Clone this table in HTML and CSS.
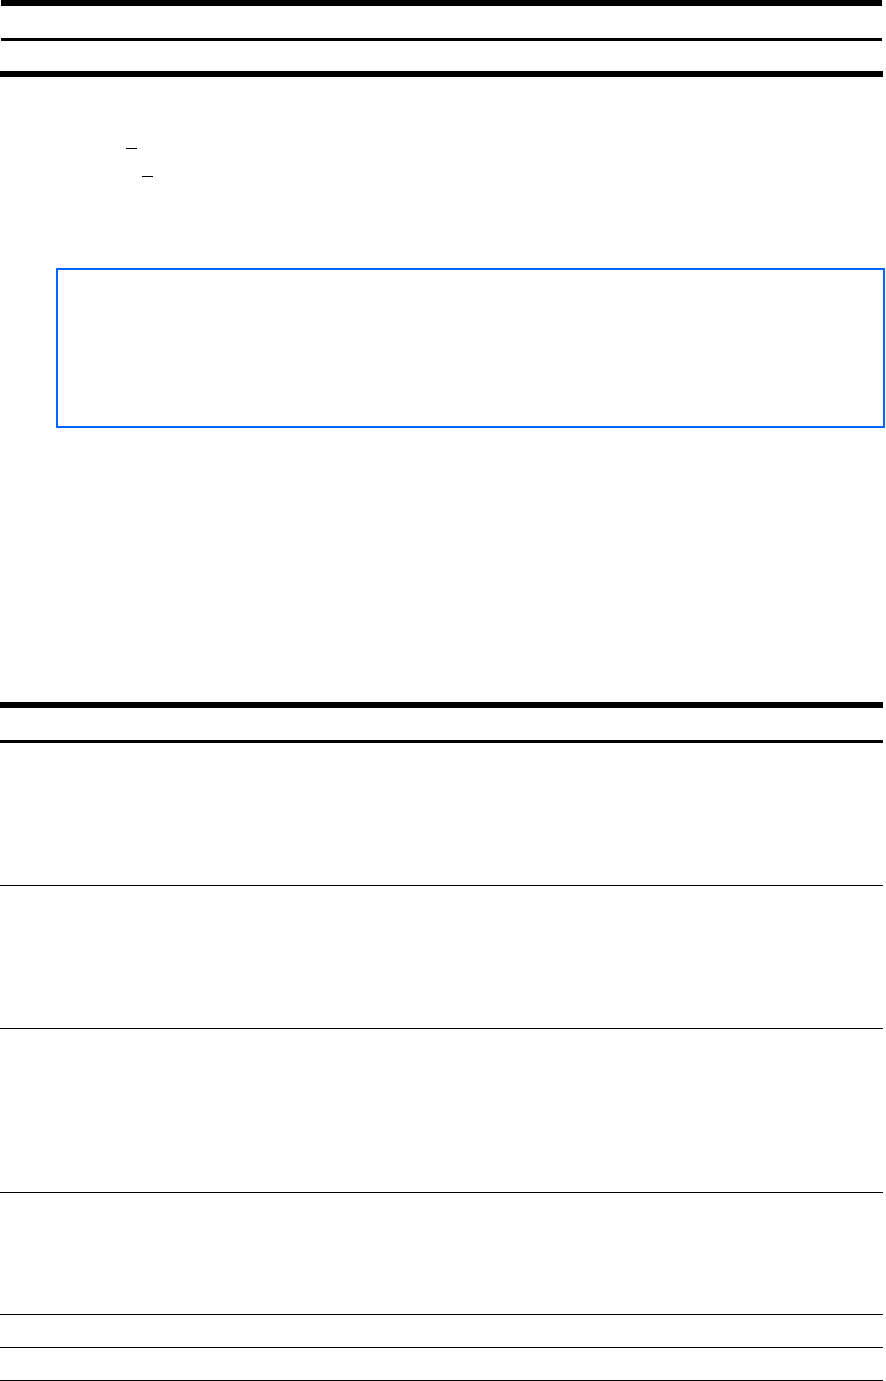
FILE: index.html
```html
<!DOCTYPE html>
<html lang="en">
<head>
  <meta charset="UTF-8">
  <title>Document</title>
  <link rel="stylesheet" href="styles.css">
</head>
<body>

  <header class="masthead">
    <div class="masthead-row top"></div>
    <div class="masthead-row bottom"></div>
  </header>

  <ul class="toc">
    <li class="toc-item level-1"><span class="blank"></span></li>
    <li class="toc-item level-2"><span class="blank"></span></li>
  </ul>

  <div class="notice"></div>

  <div class="sheet">
    <div class="head-row"></div>
    <div class="row tall"></div>
    <div class="row tall"></div>
    <div class="row taller"></div>
    <div class="row mid"></div>
    <div class="row short"></div>
    <div class="row short"></div>
  </div>

</body>
</html>
```

FILE: styles.css
```css
body {
  font-family: 'Liberation Sans', Arial, sans-serif;
  background-color: #fff;
  color: #000;
  margin: 0;
  padding: 0;
}

.masthead {
  margin: 0 4px 0 1px;
}

.masthead-row.top {
  height: 32px;
  border-top: 6px solid #000;
  border-bottom: 3px solid #000;
}

.masthead-row.bottom {
  height: 30px;
  border-bottom: 6px solid #000;
  margin-left: -1px;
  margin-right: -1px;
}

.toc {
  list-style: none;
  margin: 0;
  padding: 71px 0 0;
}

.toc-item {
  height: 28px;
}

.blank {
  display: block;
  width: 11px;
  border-top: 1px solid #000;
}

.level-1 .blank {
  margin-left: 126px;
}

.level-2 .blank {
  margin-left: 142px;
}

.notice {
  box-sizing: border-box;
  margin: 64px 0 0 56px;
  width: 829px;
  height: 160px;
  border: 2px solid #0066ff;
}

.sheet {
  margin-top: 274px;
  width: 883px;
  border-top: 6px solid #000;
}

.head-row {
  height: 32px;
  border-bottom: 3px solid #000;
}

.row {
  border-bottom: 1px solid #000;
}

.row.tall {
  height: 142px;
}

.row.taller {
  height: 163px;
}

.row.mid {
  height: 121px;
}

.row.short {
  height: 32px;
}
```
